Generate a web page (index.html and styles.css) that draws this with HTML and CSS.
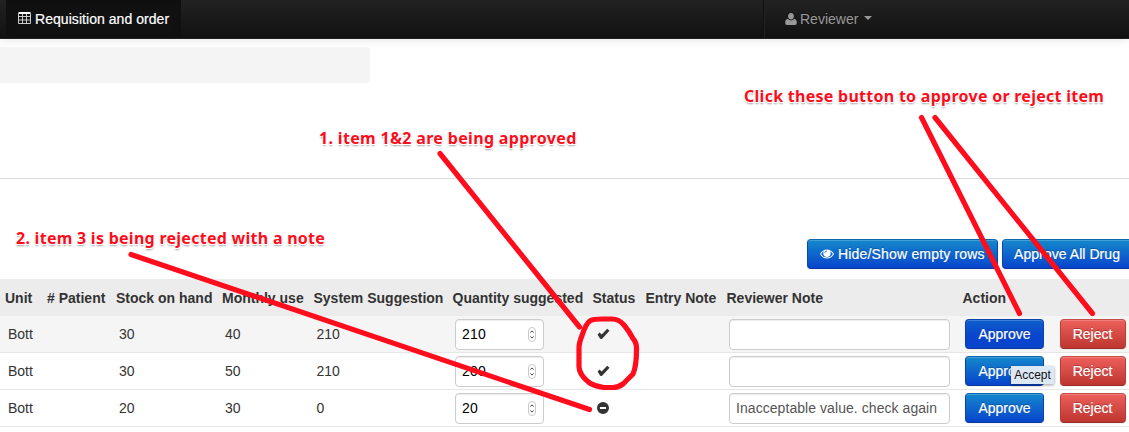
FILE: index.html
```
<!DOCTYPE html>
<html lang="en">
<head>
<meta charset="utf-8">
<title>Requisition and order</title>
<link rel="stylesheet" href="styles.css">
</head>
<body>
<svg class="defs" aria-hidden="true">
  <symbol id="check" viewBox="0 0 13 12"><path d="M.6 6.4 2.6 4.5 4.7 6.6 10.2.7 12.5 2.8 4.9 10.9 3.1 10.8Z"/></symbol>
  <symbol id="spin" viewBox="0 0 8 15"><rect x=".5" y=".5" width="7" height="14" rx="3.5" fill="#fff" stroke="#c8c8c8"/><path d="M2.4 5.6 4 3.9 5.6 5.6M2.4 9.4 4 11.1 5.6 9.4" fill="none" stroke="#444"/></symbol>
</svg>
<header class="navbar">
  <a class="nav-item active"><svg class="icon-table" viewBox="0 0 13 12"><path d="M.5 1.500V11.500H12.500V1.500M.5 4.500H12.500M.5 8H12.500M4.500 2V11.500M8.500 2V11.500"/><path class="table-top" d="M.5 1H12.500"/></svg><span class="nav-title">Requisition and order</span></a>
  <a class="nav-item user"><svg class="icon-user" viewBox="0 0 12 12"><path d="M6 0C7.8 0 8.9 1.4 8.9 3.2S7.7 6.6 6 6.6 3.1 5 3.1 3.2 4.200 0 6 0ZM3 5.800C3.700 6.900 4.700 7.500 6 7.500S8.300 6.900 9 5.800C11 6 11.800 7.500 11.800 9.800 11.800 11.200 11.100 12 10 12H2C.9 12 .2 11.200 .2 9.800 .2 7.500 1 6 3 5.800Z"/></svg><span>Reviewer</span><i class="caret"></i></a>
</header>
<main>
  <div class="breadcrumb"></div>
  <hr class="rule">
  <div class="toolbar">
    <button class="btn primary hide-rows"><svg class="icon-eye" viewBox="0 0 14 10"><path fill-rule="evenodd" d="M0 5C1.600 2 4.200.4 7 .4S12.400 2 14 5C12.400 8 9.800 9.600 7 9.600S1.600 8 0 5ZM1.100 5C2.400 7.300 4.600 8.600 7 8.600S11.600 7.300 12.900 5C12.200 3.800 11.300 2.900 10.200 2.300 11.700 5.500 9.800 8 7 8S2.300 5.500 3.800 2.300C2.700 2.900 1.800 3.800 1.100 5ZM7 1.500C5.600 1.500 4.500 2.600 4.500 4H5.200C5.200 3 6 2.200 7 2.200Z"/></svg><span>Hide/Show empty rows</span></button>
    <button class="btn primary all">Approve All Drug</button>
  </div>
  <section class="table">
    <div class="row head"><span>Unit</span><span># Patient</span><span>Stock on hand</span><span>Monthly use</span><span>System Suggestion</span><span>Quantity suggested</span><span>Status</span><span>Entry Note</span><span>Reviewer Note</span><span>Action</span></div>
    <div class="row hovered"><span>Bott</span><span></span><span>30</span><span>40</span><span>210</span><span><b class="field qty">210<svg class="spin"><use href="#spin"/></svg></b></span><span class="status"><svg class="check"><use href="#check"/></svg></span><span></span><span><b class="field note"></b></span><span class="actions"><button class="btn primary pressed">Approve</button><button class="btn danger">Reject</button></span></div>
    <div class="row"><span>Bott</span><span></span><span>30</span><span>50</span><span>210</span><span><b class="field qty">200<svg class="spin"><use href="#spin"/></svg></b></span><span class="status"><svg class="check"><use href="#check"/></svg></span><span></span><span><b class="field note"></b></span><span class="actions"><button class="btn primary">Approve</button><button class="btn danger">Reject</button></span></div>
    <div class="row"><span>Bott</span><span></span><span>20</span><span>30</span><span>0</span><span><b class="field qty">20<svg class="spin"><use href="#spin"/></svg></b></span><span class="status"><svg class="minus" viewBox="0 0 12 12"><path fill-rule="evenodd" d="M6 0A6 6 0 0 1 6 12A6 6 0 0 1 6 0ZM2.900 4.900V7.100H9.100V4.900Z"/></svg></span><span></span><span><b class="field note">Inacceptable value. check again</b></span><span class="actions"><button class="btn primary">Approve</button><button class="btn danger">Reject</button></span></div>
  </section>
</main>
<div class="tooltip">Accept</div>
<svg class="marks" viewBox="0 0 1129 432"><path d="M440 153.500 579.500 327M131 254.500 589.500 409.500M921.500 117.500 1019.500 313.500M935 117.500 1092.500 313.500M590.500 320.500Q593 319 602 319H612Q619 319 624 325 629 331 633 338.500 637 343 636.500 350 636.500 366 633 374L623 384Q618 387.500 613 387.500H604Q594 386 589 382.500 579.500 375 579 367V348Q579 343 582 335.500 586 323 590.500 320.500Z"/></svg>
<div class="annotation approve-note">1. item 1&amp;2 are being approved</div>
<div class="annotation reject-note">2. item 3 is being rejected with a note</div>
<div class="annotation button-note">Click these button to approve or reject item</div>
</body>
</html>
```
FILE: styles.css
```
* { box-sizing: border-box; }
body { margin: 0; width: 1129px; height: 432px; overflow: hidden; position: relative; background: #fff; color: #333; font: 14px/20px "Liberation Sans", Arial, sans-serif; }
svg { display: block; flex: none; }
.defs { position: absolute; width: 0; height: 0; }
.navbar { display: flex; justify-content: space-between; height: 39px; padding-left: 6px; background: linear-gradient(#222, #111); border-bottom: 1px solid #202020; box-shadow: 0 1px 10px rgba(0,0,0,.1); }
.nav-item { display: flex; align-items: center; color: #999; text-shadow: 0 -1px 0 rgba(0,0,0,.25); }
.active { width: 175px; padding: 0 0 1px 12px; gap: 4px; background: #111; color: #fff; box-shadow: inset 0 3px 8px rgba(0,0,0,.125); }
.nav-title { letter-spacing: .05px; -webkit-text-stroke: .2px; }
.user { width: 366px; padding: 0 0 1px 21px; gap: 3px; border-left: 1px solid #111; box-shadow: inset 1px 0 #222; }
.icon-table { width: 13px; height: 12px; fill: none; stroke: #ccc; margin-top: -1px; }
.table-top { stroke: #fff; stroke-width: 2px; }
.icon-user { width: 12px; height: 12px; fill: #999; }
.caret { border: 4px solid transparent; border-top-color: #999; border-bottom: 0; margin: -1px 0 0 3px; }
.breadcrumb { width: 370px; height: 36px; margin-top: 8px; background: #f4f4f4; border-radius: 0 4px 4px 0; }
.rule { height: 1px; margin: 95px 0 60px; border: 0; background: #ddd; }
.toolbar { display: flex; gap: 4px; padding-left: 807px; height: 40px; }
.btn { flex: none; height: 30px; padding: 0 12px; border: 1px solid; border-radius: 4px; color: #fff; font: inherit; white-space: nowrap; text-shadow: 0 -1px 0 rgba(0,0,0,.25); -webkit-text-stroke: .2px; box-shadow: inset 0 1px 0 rgba(255,255,255,.2), 0 1px 2px rgba(0,0,0,.05); }
.primary { width: 79px; background: linear-gradient(#1488cc, #0844cc); border-color: #0e66ae #0a45ac #0a389c; }
.pressed { background: linear-gradient(#0d60cc, #0844cc 55%); border-color: #0844aa #0844aa #0a389c; }
.danger { width: 66px; padding: 0 12px 0 11px; background: linear-gradient(#ee5f5b, #bd362f); border-color: #c74c48 #b73e39 #9c2c27; }
.hide-rows { display: flex; align-items: center; width: 191px; gap: 4px; letter-spacing: .18px; }
.icon-eye { width: 14px; height: 10px; fill: #fff; }
.all { width: 132px; padding-left: 11px; text-align: left; letter-spacing: .06px; }
.row { display: grid; grid-template-columns: 42px 69px 106px 91.5px 138.5px 140px 53px 81px 236px 172px; align-items: center; height: 37px; border-bottom: 1px solid #e6e6e6; white-space: nowrap; }
.row > span { padding-left: 8px; }
.head { height: 37px; background: #ececec; border: 0; font-weight: bold; }
.head > span { padding-left: 5px; }
.head > span:nth-child(n+6) { padding-left: 5.5px; }
.hovered { background: #f5f5f5; }
.field { display: flex; align-items: center; height: 31px; border: 1px solid #ccc; border-radius: 4px; background: #fff; font-weight: normal; box-shadow: inset 0 1px 1px rgba(0,0,0,.075); }
.qty { width: 89px; padding: 0 7px 0 6px; justify-content: space-between; color: #000; letter-spacing: .2px; }
.note { width: 221px; padding-left: 6px; color: #555; letter-spacing: .06px; }
.spin { width: 8px; height: 15px; }
.row > .status { padding-left: 10px; }
.check { width: 13px; height: 12px; fill: #333; }
.minus { width: 12px; height: 12px; fill: #333; }
.actions { display: flex; gap: 16px; }
.tooltip { position: absolute; left: 1011px; top: 366px; width: 43px; height: 18px; background: #dde8f5; color: #111; font-size: 12px; line-height: 18px; text-align: center; box-shadow: 0 1px 3px rgba(0,0,0,.4); }
.marks { position: absolute; inset: 0; width: 1129px; height: 432px; fill: none; stroke: #ff0c1d; stroke-width: 5.200px; stroke-linecap: round; stroke-linejoin: round; }
.annotation { position: absolute; color: #fc0d1b; font: bold 16px/22px "Noto Sans", sans-serif; letter-spacing: .27px; white-space: nowrap; text-shadow: -1px -1px #fff, 1px -1px #fff, -1px 1px #fff, 1px 1px #fff, 0 2px 2px rgba(0,0,0,.4); }
.approve-note { left: 319px; top: 127px; letter-spacing: .33px; }
.reject-note { left: 16px; top: 227px; }
.button-note { left: 744px; top: 85px; }
```
